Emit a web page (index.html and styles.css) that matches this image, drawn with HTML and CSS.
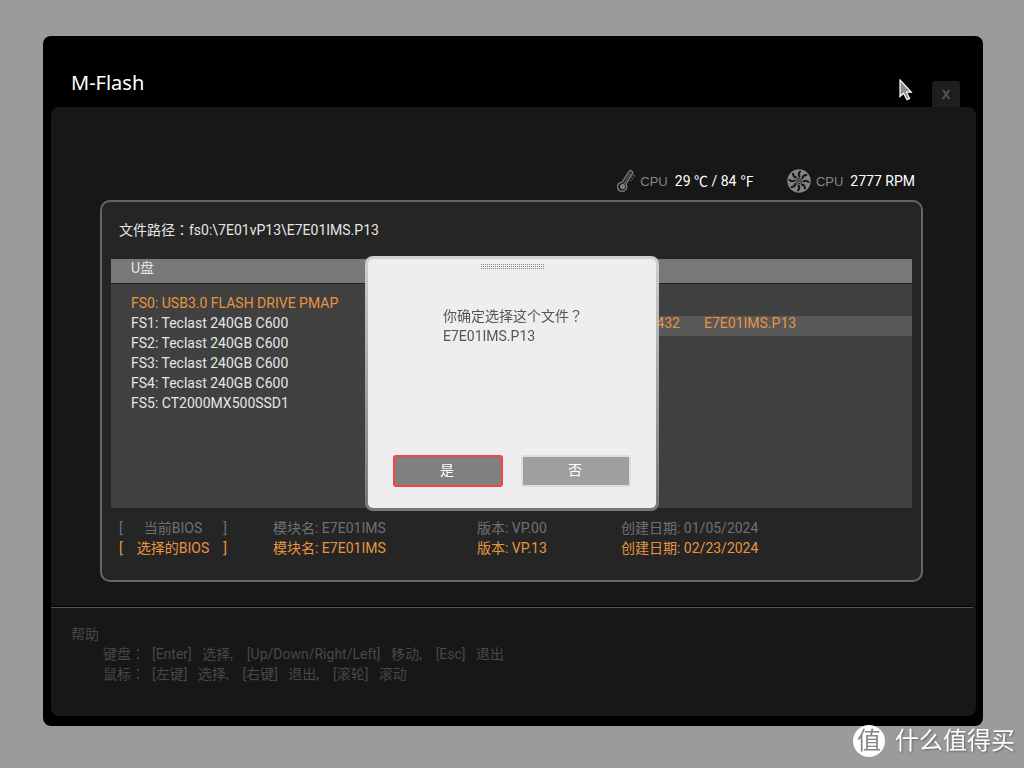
FILE: index.html
```html
<!DOCTYPE html>
<html lang="zh-CN">
<head>
<meta charset="utf-8">
<meta name="viewport" content="width=device-width, initial-scale=1">
<title>M-Flash</title>
<link rel="stylesheet" href="styles.css">
</head>
<body>
<main class="window">
  <header class="titlebar">
    <h1 class="title">M-Flash</h1>
    <button class="close" type="button">X</button>
  </header>
  <div class="content">
    <div class="status">
      <div class="sensor">
        <svg class="thermo" viewBox="0 0 20 24" aria-hidden="true">
          <path d="M5.200 13.200 12 2.600a2 2 0 0 1 3.400 2.100L8.900 15.200a4.600 4.600 0 1 1-3.700-2z" fill="none" stroke="#777" stroke-width="1.500"/>
          <path d="M13.500 4 6.300 16" stroke="#777" stroke-width="1"/>
          <circle cx="5.600" cy="17.600" r="2.600" fill="#808080"/>
          <path d="m16 6 2 1.500M14.500 8.500l1.800 1.300M13 11l1.500 1" stroke="#777" stroke-width="1"/>
        </svg>
        <span class="label">CPU</span>
        <span class="value">29 ℃ / 84 ℉</span>
      </div>
      <div class="sensor">
        <svg class="fan" viewBox="0 0 24 24" aria-hidden="true">
          <circle cx="12" cy="12" r="11.700" fill="#838383"/>
          <g fill="none" stroke="#171717" stroke-width="2" stroke-linecap="round">
            <path id="slot" d="M12.500 7.600q-1.800-2.600 0.500-5"/>
            <use href="#slot" transform="rotate(45 12 12)"/>
            <use href="#slot" transform="rotate(90 12 12)"/>
            <use href="#slot" transform="rotate(135 12 12)"/>
            <use href="#slot" transform="rotate(180 12 12)"/>
            <use href="#slot" transform="rotate(225 12 12)"/>
            <use href="#slot" transform="rotate(270 12 12)"/>
            <use href="#slot" transform="rotate(315 12 12)"/>
          </g>
          <circle cx="12" cy="12" r="2.400" fill="#838383" stroke="#171717"/>
          <circle cx="12" cy="12" r="1" fill="#333"/>
        </svg>
        <span class="label">CPU</span>
        <span class="value">2777 RPM</span>
      </div>
    </div>

    <section class="panel">
      <p class="path">文件路径<span class="wide" lang="zh-TW">：</span>fs0:\7E01vP13\E7E01IMS.P13</p>
      <div class="browser">
        <h2 class="browser-head">U盘</h2>
        <div class="browser-body">
          <ul class="drives">
            <li class="active">FS0: USB3.0 FLASH DRIVE PMAP</li>
            <li>FS1: Teclast 240GB C600</li>
            <li>FS2: Teclast 240GB C600</li>
            <li>FS3: Teclast 240GB C600</li>
            <li>FS4: Teclast 240GB C600</li>
            <li>FS5: CT2000MX500SSD1</li>
          </ul>
          <ul class="files">
            <li class="file"><span class="size">33554432</span><span>E7E01IMS.P13</span></li>
          </ul>
        </div>
      </div>
      <table class="bios">
        <tr>
          <th scope="row"><span class="bracket"><span>[</span><span>当前BIOS</span><span>]</span></span></th>
          <td class="module">模块名: E7E01IMS</td><td class="version">版本: VP.00</td><td>创建日期: 01/05/2024</td>
        </tr>
        <tr class="selected">
          <th scope="row"><span class="bracket"><span>[</span><span>选择的BIOS</span><span>]</span></span></th>
          <td class="module">模块名: E7E01IMS</td><td class="version">版本: VP.13</td><td>创建日期: 02/23/2024</td>
        </tr>
      </table>
    </section>

    <footer class="help">
      <h2 class="help-title">帮助</h2>
      <p class="help-line">键盘<span class="wide" lang="zh-TW">：</span>  [Enter]   选择,    [Up/Down/Right/Left]   移动,    [Esc]   退出</p>
      <p class="help-line">鼠标<span class="wide" lang="zh-TW">：</span>  [左键]   选择,    [右键]   退出,    [滚轮]   滚动</p>
    </footer>
  </div>
</main>

<dialog class="confirm" open aria-labelledby="question">
  <div class="grip"></div>
  <div class="message" id="question">
    <p>你确定选择这个文件<span class="wide" lang="zh-TW">？</span></p>
    <p>E7E01IMS.P13</p>
  </div>
  <div class="actions">
    <button class="choice yes" type="button">是</button>
    <button class="choice" type="button">否</button>
  </div>
</dialog>

<svg class="cursor" viewBox="0 0 14 22" aria-hidden="true">
  <path d="M1 1v16.500l3.500-3.300 3.500 6.500 2.600-1.300-3.200-6.200h4.900z" fill="#8c8c8c" stroke="#fff" stroke-width="1.200"/>
</svg>

<div class="watermark"><span class="badge">值</span><span>什么值得买</span></div>
</body>
</html>
```
FILE: styles.css
```css
* {
  box-sizing: border-box;
}

body {
  display: flex;
  min-height: 100vh;
  margin: 0;
  padding: 36px 41px 42px 43px;
  background: #9b9b9b;
  color: #e6e6e6;
  font: 14px/20px Roboto, "Noto Sans CJK SC", sans-serif;
}

h1, h2, p, ul {
  margin: 0;
  padding: 0;
  font-size: inherit;
  font-weight: 400;
  list-style: none;
}

button {
  padding: 0;
  font: inherit;
}

.wide {
  font-family: "Noto Sans CJK TC", sans-serif;
  line-height: 1;
}

.window {
  display: flex;
  flex: 1;
  flex-direction: column;
  padding: 0 7px 10px 8px;
  border-radius: 8px;
  background: #000;
}

.titlebar {
  display: flex;
  align-items: flex-end;
  justify-content: space-between;
  padding: 33px 16px 0 20px;
}

.title {
  padding-bottom: 10px;
  color: #fff;
  font: 20px/28px "Noto Sans", sans-serif;
}

.close {
  width: 28px;
  height: 26px;
  border: 0;
  border-radius: 3px 3px 0 0;
  background: #1e1e1e;
  color: #555;
  font: bold 13px/24px "Noto Sans", sans-serif;
}

.content {
  display: flex;
  flex: 1;
  flex-direction: column;
  padding-top: 62px;
  border-radius: 8px;
  background: #171717;
}

.status {
  display: flex;
  justify-content: flex-end;
  gap: 33px;
  margin-bottom: 7px;
  padding-right: 61px;
}

.sensor {
  display: flex;
  align-items: center;
  height: 24px;
}

.thermo {
  width: 20px;
  height: 24px;
  margin-right: 3px;
}

.fan {
  width: 24px;
  height: 24px;
  margin-right: 5px;
}

.label {
  margin-right: 7px;
  padding-top: 2px;
  color: #858585;
  font: 13px/20px "Liberation Sans", sans-serif;
}

.value {
  color: #fff;
}

.panel {
  flex: 1;
  margin: 0 53px 25px 49px;
  padding: 18px 9px 21px;
  border: 2px solid #666;
  border-radius: 10px;
  background: #252525;
}

.path {
  height: 20px;
  margin-bottom: 19px;
  padding-left: 8px;
}

.browser-head {
  padding: 0 20px 6px;
  border-bottom: 1px solid #202020;
  background: #787878;
  line-height: 18px;
}

.browser-body {
  display: grid;
  grid-template-columns: 254px 1fr;
  min-height: 224px;
  background: #404040;
}

.drives {
  padding: 9px 0 0 20px;
  white-space: nowrap;
}

.active, .selected {
  color: #e8953f;
}

.files {
  padding-top: 32px;
}

.file {
  display: flex;
  gap: 24px;
  padding-bottom: 6px;
  background: #585858;
  color: #e8953f;
  line-height: 14px;
}

.size {
  width: 315px;
  text-align: right;
}

.bios {
  width: 100%;
  margin-top: 10px;
  border-collapse: collapse;
  color: #707070;
  table-layout: fixed;
}

.bios th, .bios td {
  padding: 0;
  font-weight: 400;
  text-align: left;
}

.bios th {
  width: 162px;
  padding-left: 8px;
}

.bios .module {
  width: 204px;
}

.bios .version {
  width: 144px;
}

.bios .selected {
  color: #e8953f;
}

.bracket {
  display: flex;
  justify-content: space-between;
  width: 108px;
}

.help {
  margin-right: 3px;
  padding: 16px 20px 32px;
  border-top: 1px solid #555;
  box-shadow: 0 -1px #000;
  color: #484848;
}

.help-line {
  padding-left: 32px;
  white-space: pre-wrap;
}

.confirm {
  position: fixed;
  inset: 0 0 1px;
  display: flex;
  flex-direction: column;
  width: 294px;
  height: 255px;
  margin: auto;
  padding: 5px 25px 21px;
  border: 3px solid transparent;
  border-radius: 8px;
  background: linear-gradient(#eee, #eee) padding-box, linear-gradient(#d0d0d0, #787878) border-box;
  color: #555;
}

.grip {
  align-self: center;
  width: 64px;
  height: 6px;
  background: conic-gradient(#888 25%, transparent 0) 0 0 / 2px 2px;
}

.message {
  flex: 1;
  padding: 36px 0 0 50px;
}

.actions {
  display: flex;
  gap: 18px;
}

.choice {
  width: 110px;
  height: 32px;
  padding: 0 2px 2px 0;
  border: 2px solid #ddd;
  border-radius: 3px;
  background: #9f9f9f;
  color: #fff;
}

.yes {
  border-color: #f94343;
  background: #808080;
}

.cursor {
  position: absolute;
  top: 79px;
  left: 899px;
  width: 14px;
  height: 22px;
}

.watermark {
  position: fixed;
  right: 9px;
  bottom: 11px;
  display: flex;
  align-items: center;
  gap: 10px;
  color: #fff;
  font-size: 24px;
  line-height: 32px;
  text-shadow: 1px 1px 2px #666;
}

.badge {
  width: 32px;
  border-radius: 50%;
  background: #fff;
  color: #858585;
  text-align: center;
  text-shadow: none;
}
```
